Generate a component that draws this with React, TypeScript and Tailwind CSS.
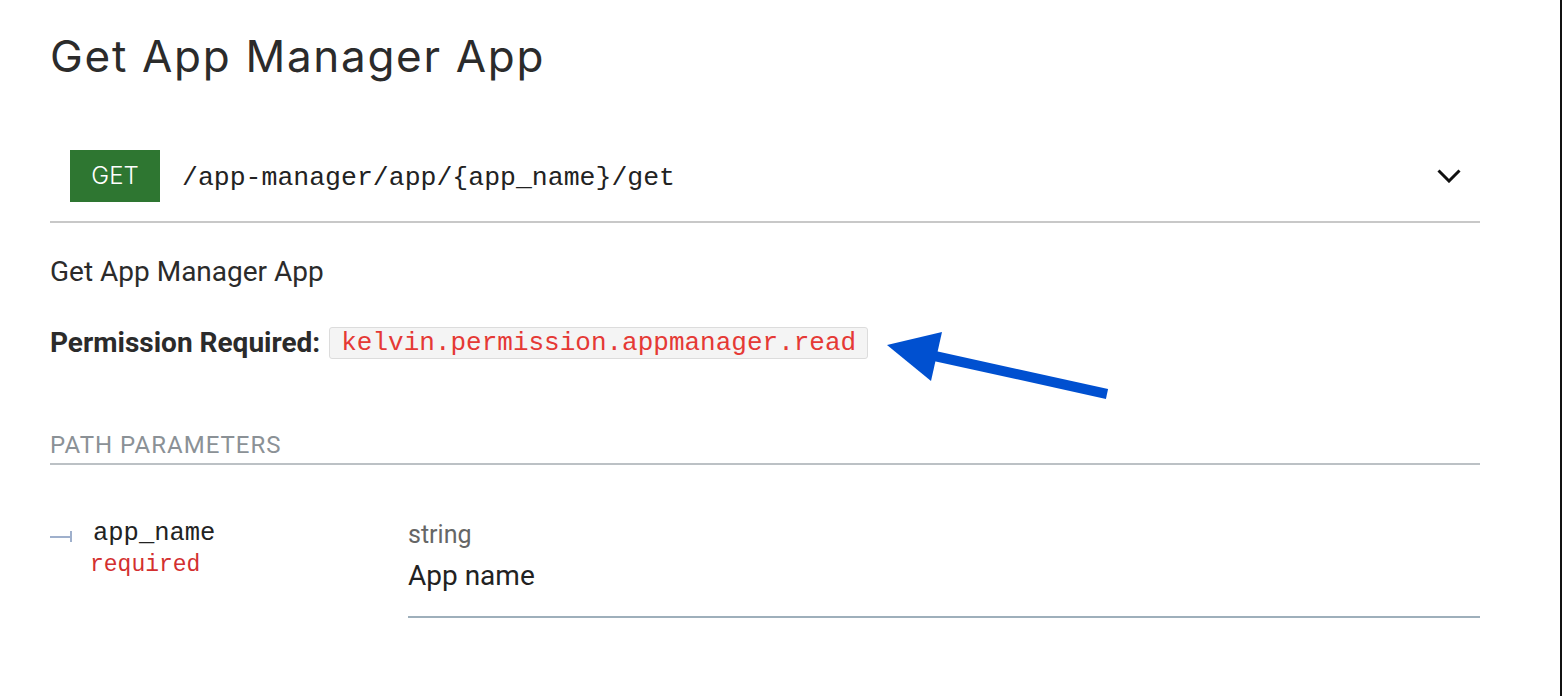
const mono = { fontFamily: '"Liberation Mono", "Courier New", monospace' };

export default function App() {
  return (
    <div
      className="relative min-h-[696px] w-full border-r-2 border-[#111111] bg-white"
      style={{ fontFamily: 'Roboto, "Liberation Sans", sans-serif' }}
    >
      <div className="w-[1480px] pl-[50px]">
        {/* Title */}
        <h1
          className="pt-[30px] text-[44px] leading-[52px] font-normal tracking-[1.7px] text-[#2b2b2b]"
          style={{ fontFamily: 'Inter, "Noto Sans", sans-serif' }}
        >
          Get App Manager App
        </h1>

        {/* Endpoint */}
        <div className="mt-[68px] flex items-center border-b-2 border-[#c8c8c8] pr-[19px] pb-[19px] pl-[20px]">
          <span
            className="flex h-[52px] w-[90px] items-center justify-center bg-[#2e7631] text-[24px] font-light text-white"
            style={{ fontFamily: 'Inter, "Noto Sans", sans-serif' }}
          >
            GET
          </span>
          <span className="ml-[22px] pt-[5px] text-[26.5px] text-[#222222]" style={mono}>
            /app-manager/app/{'{app_name}'}/get
          </span>
          <svg className="ml-auto" width="24" height="14" viewBox="0 0 24 14">
            <polyline points="1.5,1.5 12,12 22.5,1.5" fill="none" stroke="#111" strokeWidth="3" />
          </svg>
        </div>

        {/* Description */}
        <p className="mt-[31px] text-[28px] leading-[36px] text-[#2b2b2b]">Get App Manager App</p>

        <div className="mt-[37px] flex items-center">
          <span className="text-[28px] leading-[32px] font-bold text-[#2b2b2b]">Permission Required:</span>
          <code
            className="ml-[9px] flex h-[32px] items-center rounded-[3px] border border-[#dcdcdc] bg-[#f4f4f4] px-[11px] text-[26px] text-[#e53935]"
            style={mono}
          >
            kelvin.permission.appmanager.read
          </code>
        </div>

        {/* Path parameters */}
        <div className="mt-[71px] border-b-2 border-[#bcc1c5] pb-[3px] text-[24px] leading-[30px] tracking-[1px] text-[#8b9196]">
          PATH PARAMETERS
        </div>

        <div className="mt-[53px] flex">
          <div className="flex w-[358px]">
            <div className="mt-[13px] flex h-[11px] items-center">
              <span className="h-[2px] w-[20px] bg-[#9fb0cc]" />
              <span className="h-[11px] w-[2px] bg-[#9fb0cc]" />
            </div>
            <div className="ml-[21px] flex flex-col">
              <span className="text-[25.5px] leading-[32px] text-[#222222]" style={mono}>
                app_name
              </span>
              <span className="-ml-[3px] text-[23px] leading-[30px] text-[#d32f2f]" style={mono}>
                required
              </span>
            </div>
          </div>
          <div className="flex-1 border-b-2 border-[#9eafbb] pb-[21px]">
            <div className="text-[25px] leading-[34px] text-[#666666]">string</div>
            <div className="mt-[5px] text-[28px] leading-[38px] text-[#222222]">App name</div>
          </div>
        </div>
      </div>

      {/* Annotation arrow */}
      <svg className="absolute top-0 left-0" width="1562" height="696" viewBox="0 0 1562 696">
        <line x1="1107" y1="394" x2="930" y2="355" stroke="#0050d0" strokeWidth="10" />
        <polygon points="887,345 942,332 931,381" fill="#0050d0" />
      </svg>
    </div>
  );
}
